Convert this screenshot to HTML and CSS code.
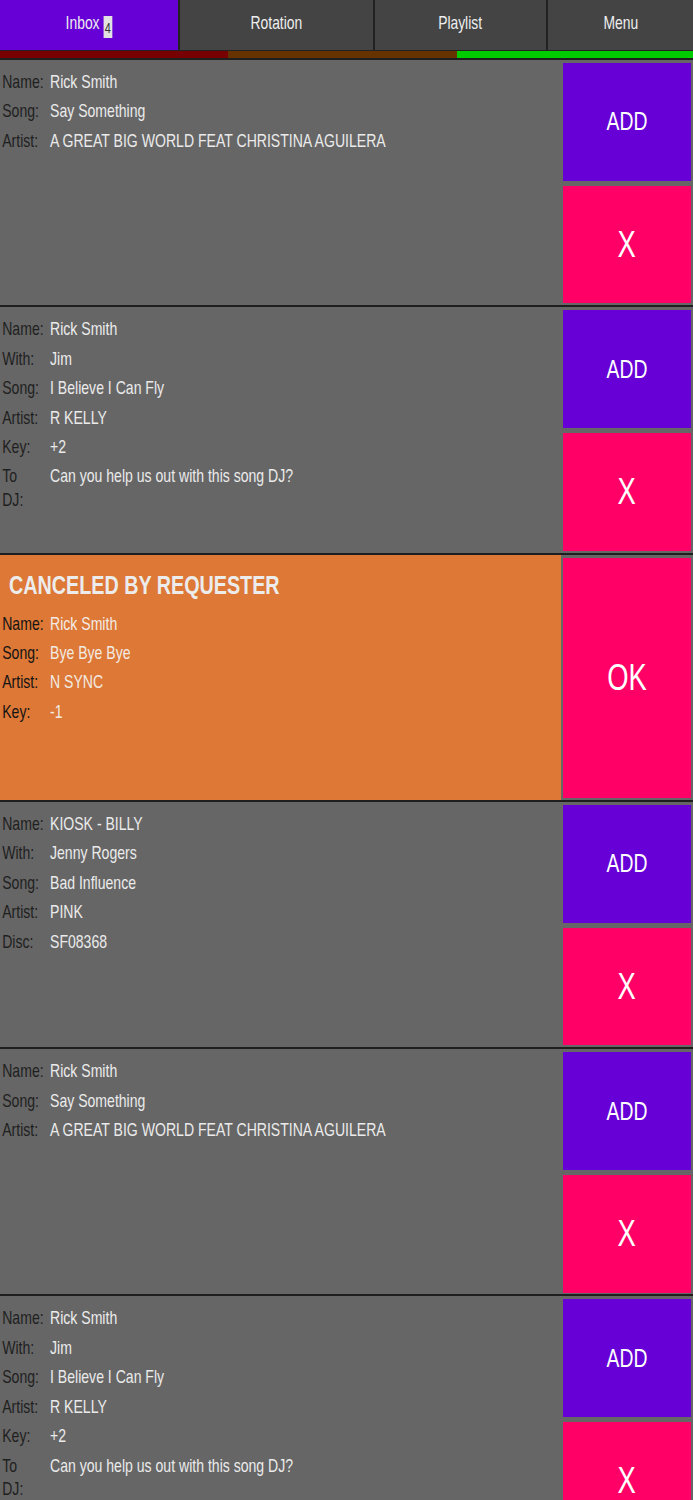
FILE: index.html
```html
<!DOCTYPE html>
<html lang="en">
<head>
<meta charset="utf-8">
<title>Inbox</title>
<link rel="stylesheet" href="styles.css">
</head>
<body>
<nav class="tabs">
  <div class="tab active"><span class="tab-label">Inbox <span class="badge">4</span></span></div>
  <div class="tab"><span class="tab-label">Rotation</span></div>
  <div class="tab"><span class="tab-label">Playlist</span></div>
  <div class="tab"><span class="tab-label">Menu</span></div>
</nav>
<div class="status">
  <span class="seg red"></span>
  <span class="seg brown"></span>
  <span class="seg green"></span>
</div>
<main class="list">
  <section class="card">
    <div class="info">
      <dl class="fields">
        <dt>Name:</dt><dd>Rick Smith</dd>
        <dt>Song:</dt><dd>Say Something</dd>
        <dt>Artist:</dt><dd>A GREAT BIG WORLD FEAT CHRISTINA AGUILERA</dd>
      </dl>
    </div>
    <div class="actions">
      <button class="btn add"><span>ADD</span></button>
      <button class="btn remove"><span>X</span></button>
    </div>
  </section>

  <section class="card">
    <div class="info">
      <dl class="fields">
        <dt>Name:</dt><dd>Rick Smith</dd>
        <dt>With:</dt><dd>Jim</dd>
        <dt>Song:</dt><dd>I Believe I Can Fly</dd>
        <dt>Artist:</dt><dd>R KELLY</dd>
        <dt>Key:</dt><dd>+2</dd>
        <dt>To<br>DJ:</dt><dd>Can you help us out with this song DJ?</dd>
      </dl>
    </div>
    <div class="actions">
      <button class="btn add"><span>ADD</span></button>
      <button class="btn remove"><span>X</span></button>
    </div>
  </section>

  <section class="card canceled">
    <div class="info">
      <h2 class="notice">CANCELED BY REQUESTER</h2>
      <dl class="fields">
        <dt>Name:</dt><dd>Rick Smith</dd>
        <dt>Song:</dt><dd>Bye Bye Bye</dd>
        <dt>Artist:</dt><dd>N SYNC</dd>
        <dt>Key:</dt><dd>-1</dd>
      </dl>
    </div>
    <div class="actions">
      <button class="btn remove"><span>OK</span></button>
    </div>
  </section>

  <section class="card">
    <div class="info">
      <dl class="fields">
        <dt>Name:</dt><dd>KIOSK - BILLY</dd>
        <dt>With:</dt><dd>Jenny Rogers</dd>
        <dt>Song:</dt><dd>Bad Influence</dd>
        <dt>Artist:</dt><dd>PINK</dd>
        <dt>Disc:</dt><dd>SF08368</dd>
      </dl>
    </div>
    <div class="actions">
      <button class="btn add"><span>ADD</span></button>
      <button class="btn remove"><span>X</span></button>
    </div>
  </section>

  <section class="card">
    <div class="info">
      <dl class="fields">
        <dt>Name:</dt><dd>Rick Smith</dd>
        <dt>Song:</dt><dd>Say Something</dd>
        <dt>Artist:</dt><dd>A GREAT BIG WORLD FEAT CHRISTINA AGUILERA</dd>
      </dl>
    </div>
    <div class="actions">
      <button class="btn add"><span>ADD</span></button>
      <button class="btn remove"><span>X</span></button>
    </div>
  </section>

  <section class="card">
    <div class="info">
      <dl class="fields">
        <dt>Name:</dt><dd>Rick Smith</dd>
        <dt>With:</dt><dd>Jim</dd>
        <dt>Song:</dt><dd>I Believe I Can Fly</dd>
        <dt>Artist:</dt><dd>R KELLY</dd>
        <dt>Key:</dt><dd>+2</dd>
        <dt>To<br>DJ:</dt><dd>Can you help us out with this song DJ?</dd>
      </dl>
    </div>
    <div class="actions">
      <button class="btn add"><span>ADD</span></button>
      <button class="btn remove"><span>X</span></button>
    </div>
  </section>
</main>
</body>
</html>
```

FILE: styles.css
```css
html, body {
  margin: 0;
  padding: 0;
  background: #666666;
}

body {
  font-family: "Liberation Sans", Arial, sans-serif;
  font-size: 19px;
}

/* Tabs */
.tabs {
  display: grid;
  grid-template-columns: 178px 193px 171px 1fr;
  column-gap: 2px;
  background: #222222;
  border-bottom: 1px solid #222222;
}

.tab {
  height: 50px;
  line-height: 46px;
  text-align: center;
  background: #444444;
  color: #eeeeee;
  font-size: 19px;
}

.tab.active {
  background: #6600d6;
}

.tab-label {
  display: inline-block;
  transform: scaleX(0.73);
}

.badge {
  display: inline-block;
  width: 12px;
  height: 22px;
  line-height: 24px;
  vertical-align: -4px;
  background: #e2e2e2;
  color: #333333;
  font-size: 15px;
  text-align: center;
}

/* Status strip */
.status {
  display: grid;
  grid-template-columns: 228px 229px 1fr;
  height: 7px;
}

.seg.red { background: #770000; }
.seg.brown { background: #663300; }
.seg.green { background: #00cc00; }

/* Request cards */
.card {
  display: grid;
  grid-template-columns: 561px 1fr;
  height: 247.3px;
  box-sizing: border-box;
  border-top: 2px solid #1e1e1e;
  background: #666666;
}

.info {
  padding-top: 7px;
  overflow: hidden;
}

.canceled .info {
  background: #dd7836;
}

.notice {
  margin: 8px 0 9px 9px;
  line-height: 30px;
  font-size: 26.5px;
  font-weight: bold;
  color: #ececec;
  white-space: nowrap;
  transform: scaleX(0.745);
  transform-origin: 0 0;
}

.fields {
  display: grid;
  grid-template-columns: 65px 1fr;
  column-gap: 2.6px;
  margin: 0;
  transform: scaleX(0.74);
  transform-origin: 0 0;
}

.fields dt,
.fields dd {
  margin: 0;
  padding: 3px 0;
  line-height: 23.4px;
}

.fields dt {
  padding-left: 3px;
  color: #1f1f1f;
}

.fields dd {
  color: #ebebeb;
  white-space: nowrap;
}

.canceled .fields dt {
  color: #141414;
}

.canceled .fields dd {
  color: #f3ebe3;
}

/* Action buttons */
.actions {
  display: flex;
  flex-direction: column;
  gap: 5px;
  padding: 3px 2px 2px;
}

.btn {
  flex: 1;
  border: 0;
  margin: 0;
  padding: 0;
  color: #ffffff;
  font-family: inherit;
  font-size: 26.5px;
  cursor: pointer;
}

.btn span {
  display: inline-block;
  transform: scaleX(0.73);
}

.btn.add {
  background: #6600d6;
}

.btn.remove {
  background: #ff0066;
  font-size: 37.5px;
}
```
